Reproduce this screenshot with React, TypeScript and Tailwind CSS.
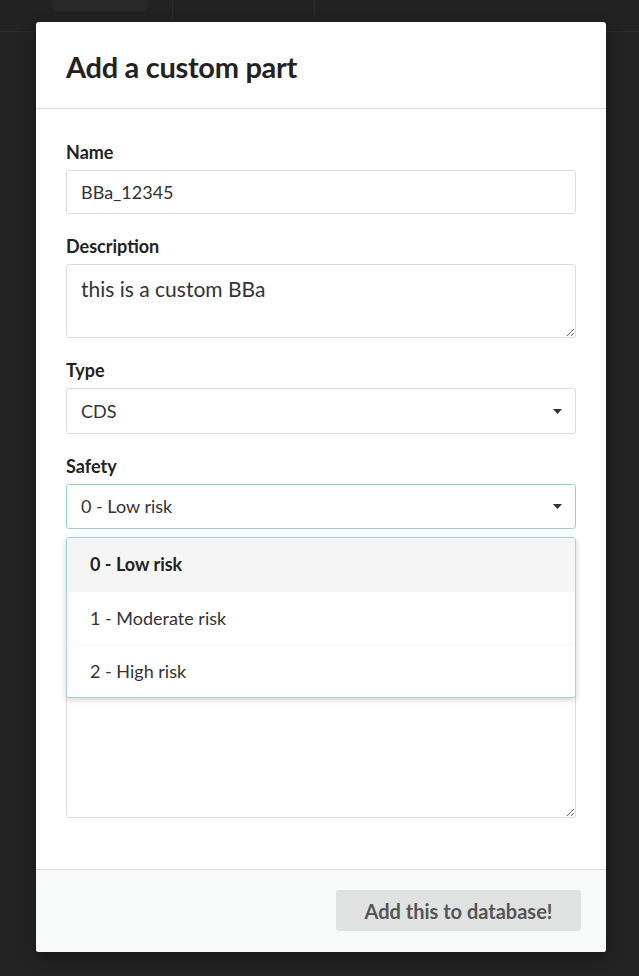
import { useState } from 'react';

const FONT = "font-['Lato','Noto_Sans',sans-serif]";

function Caret() {
  return (
    <svg className="w-[9px] h-[5px] text-[#333]" viewBox="0 0 9 5" fill="currentColor">
      <path d="M0 0h9L4.5 5z" />
    </svg>
  );
}

function Label({ children }: { children: React.ReactNode }) {
  return <div className="text-[18px] leading-[24px] font-bold text-[#222] mb-[6px]">{children}</div>;
}

const options = ['0 - Low risk', '1 - Moderate risk', '2 - High risk'];

export default function App() {
  const [safety, setSafety] = useState(options[0]);

  return (
    <div className={`${FONT} relative w-[639px] h-[976px] bg-[#232323] overflow-hidden`}>
      {/* Page header behind the overlay */}
      <div className="flex h-[32px] bg-[#222] border-b border-[#2b2b2b]">
        <div className="w-[52px]" />
        <div className="w-[96px] h-[11px] rounded-b-[3px] bg-[#282828]" />
        <div className="w-[24px]" />
        <div className="w-[142px] border-l border-[#2a2a2a]" />
        <div className="flex-1 border-l border-[#2a2a2a]" />
      </div>

      {/* Modal */}
      <div className="absolute left-[36px] top-[22px] w-[570px] bg-white rounded-[3px] shadow-[0_4px_14px_rgba(0,0,0,0.35)]">
        <div className="px-[30px] h-[87px] flex items-center border-b border-[#dedede]">
          <h2 className="text-[29px] font-bold text-[#222] tracking-[-0.3px] pt-[4px]">Add a custom part</h2>
        </div>

        <div className="px-[30px] pt-[31px] pb-[51px]">
          <div className="mb-[20px]">
            <Label>Name</Label>
            <input
              defaultValue="BBa_12345"
              className="w-full h-[44px] px-[14px] border border-[#dcdcdc] rounded-[3px] text-[18px] text-[#333] outline-none"
            />
          </div>

          <div className="mb-[20px]">
            <Label>Description</Label>
            <textarea
              defaultValue="this is a custom BBa"
              className="block w-full h-[74px] px-[14px] py-[10px] border border-[#dcdcdc] rounded-[3px] text-[21px] leading-[28px] text-[#333] outline-none resize-y"
            />
          </div>

          <div className="mb-[20px]">
            <Label>Type</Label>
            <div className="flex items-center justify-between h-[46px] pl-[14px] pr-[13px] border border-[#dcdcdc] rounded-[3px] text-[18px] text-[#333]">
              <span>CDS</span>
              <Caret />
            </div>
          </div>

          <div className="relative mb-[20px]">
            <Label>Safety</Label>
            <div className="flex items-center justify-between h-[45px] pl-[14px] pr-[13px] border border-[#9ccbdc] rounded-[3px] text-[18px] text-[#333]">
              <span>{safety}</span>
              <Caret />
            </div>

            {/* Open dropdown menu */}
            <div className="absolute z-10 left-0 right-0 top-[83px] bg-white border border-[#a9d2e1] rounded-[3px] shadow-[0_2px_6px_rgba(0,0,0,0.18)] overflow-hidden">
              {options.map((opt) => (
                <div
                  key={opt}
                  onClick={() => setSafety(opt)}
                  className={
                    opt === safety
                      ? 'h-[53px] px-[23px] flex items-center bg-[#f5f5f5] text-[18px] font-bold text-[#222] cursor-pointer'
                      : 'h-[53px] px-[23px] flex items-center border-t border-[#f6f6f6] text-[18px] text-[#333] cursor-pointer'
                  }
                >
                  {opt}
                </div>
              ))}
            </div>
          </div>

          {/* field hidden under the open menu */}
          <div>
            <div className="h-[30px]" />
            <textarea className="block w-full h-[239px] px-[14px] py-[11px] border border-[#dcdcdc] rounded-[3px] text-[18px] outline-none resize-y" />
          </div>
        </div>

        <div className="flex justify-end h-[83px] pt-[20px] pr-[25px] bg-[#f8f9f9] border-t border-[#dedede] rounded-b-[3px]">
          <button className="w-[245px] h-[41px] rounded-[3px] bg-[#e0e1e1] text-[20px] font-bold text-[#555]">
            Add this to database!
          </button>
        </div>
      </div>
    </div>
  );
}
